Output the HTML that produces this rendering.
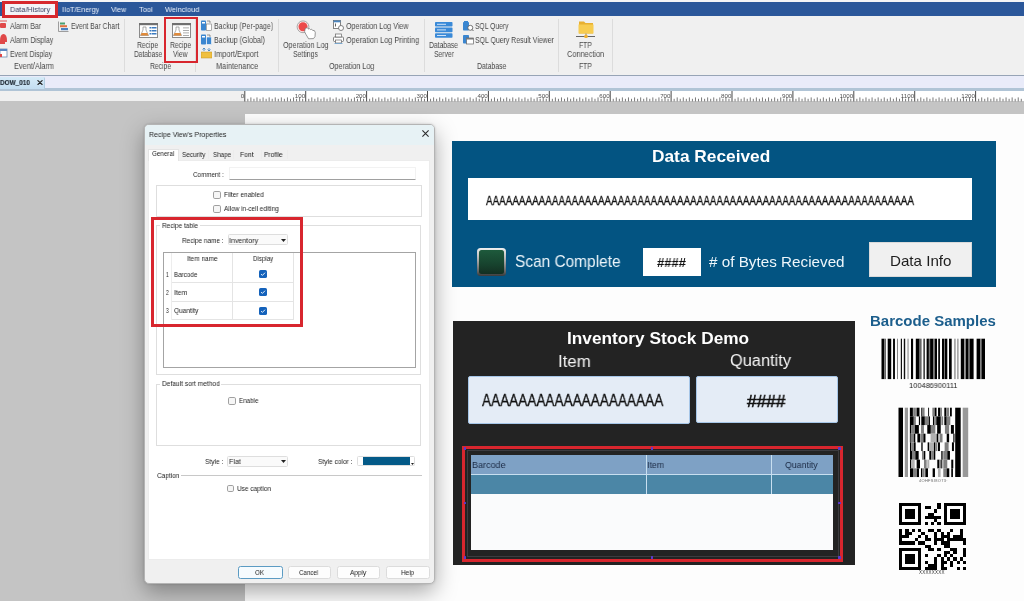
<!DOCTYPE html>
<html><head><meta charset="utf-8">
<style>
*{margin:0;padding:0;box-sizing:border-box}
html,body{width:1024px;height:601px;overflow:hidden;background:#fff;font-family:"Liberation Sans",sans-serif}
.a{position:absolute}
.t{position:absolute;white-space:nowrap;line-height:1;will-change:transform}
</style></head><body>
<div class="a" style="left:0px;top:0px;width:1024px;height:2px;background:#f4f4f6"></div>
<div class="a" style="left:0px;top:1.8px;width:1024px;height:14px;background:#2b579a"></div>
<div class="a" style="left:0px;top:15.8px;width:1024px;height:59.4px;background:#f0f0f0"></div>
<div class="a" style="left:0px;top:75px;width:1024px;height:1.2px;background:#97a4b6"></div>
<div class="a" style="left:0px;top:76.2px;width:1024px;height:11.8px;background:#e9ebf9"></div>
<div class="a" style="left:0px;top:88px;width:1024px;height:2.7px;background:#b0c4d6"></div>
<div class="a" style="left:0px;top:90.7px;width:245px;height:10.5px;background:#f0f0f0"></div>
<div class="a" style="left:245px;top:90.7px;width:779px;height:10.5px;background:#fff"></div>
<div class="a" style="left:0px;top:101.2px;width:1024px;height:500px;background:#c4c4c4"></div>
<div class="a" style="left:245px;top:114px;width:779px;height:487px;background:#fdfdfd"></div>
<div class="a" style="left:2.3px;top:1.2px;width:55.7px;height:16.6px;border:3px solid #d6282e;background:#f4f4f8"></div>
<div class="t" style="left:9.70px;top:6.00px;font-size:7.9px;color:#3a4060;transform:scaleX(0.9226);transform-origin:0 0;">Data/History</div>
<div class="t" style="left:61.70px;top:6.00px;font-size:7.9px;color:#eaf0fa;transform:scaleX(0.9133);transform-origin:0 0;">IIoT/Energy</div>
<div class="t" style="left:111.00px;top:6.00px;font-size:7.9px;color:#eaf0fa;transform:scaleX(0.8979);transform-origin:0 0;">View</div>
<div class="t" style="left:139.00px;top:6.00px;font-size:7.9px;color:#eaf0fa;transform:scaleX(0.9510);transform-origin:0 0;">Tool</div>
<div class="t" style="left:165.00px;top:6.00px;font-size:7.9px;color:#eaf0fa;transform:scaleX(0.9364);transform-origin:0 0;">Weincloud</div>
<div class="a" style="left:124.4px;top:19px;width:1px;height:53px;background:#dcdcdc"></div>
<div class="a" style="left:195.3px;top:19px;width:1px;height:53px;background:#dcdcdc"></div>
<div class="a" style="left:277.8px;top:19px;width:1px;height:53px;background:#dcdcdc"></div>
<div class="a" style="left:424.3px;top:19px;width:1px;height:53px;background:#dcdcdc"></div>
<div class="a" style="left:557.7px;top:19px;width:1px;height:53px;background:#dcdcdc"></div>
<div class="a" style="left:612.4px;top:19px;width:1px;height:53px;background:#dcdcdc"></div>
<div class="t" style="left:9.50px;top:22.00px;font-size:8.8px;color:#4a4a4a;transform:scaleX(0.7939);transform-origin:0 0;">Alarm Bar</div>
<div class="t" style="left:9.50px;top:36.00px;font-size:8.8px;color:#4a4a4a;transform:scaleX(0.7984);transform-origin:0 0;">Alarm Display</div>
<div class="t" style="left:9.50px;top:50.00px;font-size:8.8px;color:#4a4a4a;transform:scaleX(0.7815);transform-origin:0 0;">Event Display</div>
<div class="t" style="left:14.20px;top:62.00px;font-size:8.8px;color:#4a4a4a;transform:scaleX(0.8364);transform-origin:0 0;">Event/Alarm</div>
<div class="t" style="left:70.80px;top:22.00px;font-size:8.8px;color:#4a4a4a;transform:scaleX(0.7713);transform-origin:0 0;">Event Bar Chart</div>
<svg class="a" style="left:0;top:19px" width="9" height="42" viewBox="0 0 9 42">
<rect x="0" y="1.5" width="7" height="1" fill="#e05050"/><rect x="0" y="4" width="6" height="5" rx="1" fill="#e04848"/>
<path d="M0 22 Q0 15 3.5 15 Q7 15 7 22 L7 23 L0 23 Z" fill="#e04848"/><rect x="0" y="23" width="5" height="2" fill="#e04848"/>
<rect x="0" y="30" width="7" height="8" fill="#fff" stroke="#6a8ab0" stroke-width="0.8"/><rect x="0" y="30" width="7" height="2" fill="#5a86c0"/><rect x="0" y="35" width="2" height="3" fill="#e04848"/>
</svg>
<svg class="a" style="left:58px;top:21px" width="11" height="11" viewBox="0 0 11 11">
<path d="M0.5 0.5 V10.5 H10.5" fill="none" stroke="#888" stroke-width="0.8"/>
<rect x="2" y="1.5" width="5" height="2" fill="#4aa070"/><rect x="2" y="4.2" width="7" height="2" fill="#e07040"/><rect x="3" y="7" width="7" height="2.2" fill="#4a80c0"/>
</svg>
<svg class="a" style="left:138.5px;top:22.5px" width="19" height="15" viewBox="0 0 19 15"><rect x="0.5" y="0.5" width="18" height="14" fill="#fff" stroke="#8a8a8a" stroke-width="1"/><rect x="0" y="0" width="19" height="2.2" fill="#707070"/><path d="M4 4 H7 V7 L9.5 12.5 H1.5 L4 7 Z" fill="#fff" stroke="#777" stroke-width="0.6"/><path d="M2.6 10 H8.4 L9.5 12.5 H1.5 Z" fill="#e08a3a"/><rect x="10.5" y="4" width="2" height="1.5" fill="#3a7ac0"/><rect x="13" y="4" width="4.5" height="1.5" fill="#3a7ac0"/><rect x="10.5" y="7" width="2" height="1.5" fill="#3a7ac0"/><rect x="13" y="7" width="4.5" height="1.5" fill="#3a7ac0"/><rect x="10.5" y="10" width="2" height="1.5" fill="#3a7ac0"/><rect x="13" y="10" width="4.5" height="1.5" fill="#3a7ac0"/></svg>
<svg class="a" style="left:171.5px;top:22.5px" width="19" height="15" viewBox="0 0 19 15"><rect x="0.5" y="0.5" width="18" height="14" fill="#fff" stroke="#8a8a8a" stroke-width="1"/><rect x="0" y="0" width="19" height="2.2" fill="#707070"/><path d="M4 4 H7 V7 L9.5 12.5 H1.5 L4 7 Z" fill="#fff" stroke="#777" stroke-width="0.6"/><path d="M2.6 10 H8.4 L9.5 12.5 H1.5 Z" fill="#e08a3a"/><rect x="11" y="4.5" width="6" height="0.8" fill="#999"/><rect x="11" y="7" width="6" height="0.8" fill="#999"/><rect x="11" y="9.5" width="6" height="0.8" fill="#999"/><rect x="11" y="12" width="6" height="0.8" fill="#999"/></svg>
<div class="t" style="left:136.80px;top:41.00px;font-size:8.8px;color:#4a4a4a;transform:scaleX(0.7712);transform-origin:0 0;">Recipe</div>
<div class="t" style="left:133.80px;top:50.00px;font-size:8.8px;color:#4a4a4a;transform:scaleX(0.7494);transform-origin:0 0;">Database</div>
<div class="t" style="left:170.00px;top:41.00px;font-size:8.8px;color:#4a4a4a;transform:scaleX(0.7712);transform-origin:0 0;">Recipe</div>
<div class="t" style="left:173.10px;top:50.00px;font-size:8.8px;color:#4a4a4a;transform:scaleX(0.7671);transform-origin:0 0;">View</div>
<div class="t" style="left:149.80px;top:62.00px;font-size:8.8px;color:#4a4a4a;transform:scaleX(0.7712);transform-origin:0 0;">Recipe</div>
<div class="a" style="left:164.2px;top:17.1px;width:33.5px;height:45.5px;border:2.7px solid #d8262e"></div>
<svg class="a" style="left:201px;top:20px" width="11" height="40" viewBox="0 0 11 40">
<rect x="0" y="0.5" width="5" height="10" rx="0.8" fill="#3a86d0"/><rect x="1" y="2" width="3" height="1.5" fill="#fff"/><rect x="5.5" y="4" width="5" height="6.5" fill="#fff" stroke="#777" stroke-width="0.6"/><path d="M6 1 L9 1 L9 3" fill="none" stroke="#555" stroke-width="0.6"/>
<rect x="0" y="14.5" width="5" height="10" rx="0.8" fill="#3a86d0"/><rect x="1" y="16" width="3" height="1.5" fill="#fff"/><rect x="5.5" y="17" width="5" height="7.5" fill="#3a86d0" stroke="#fff" stroke-width="0.6"/><path d="M6 15 L9 15 L9 17" fill="none" stroke="#555" stroke-width="0.6"/>
<rect x="0" y="32" width="11" height="6" fill="#f0c040" stroke="#c09020" stroke-width="0.5"/><path d="M3 31 V28 M1.5 29.5 L3 28 L4.5 29.5 M8 28 V31 M6.5 29.5 L8 31 L9.5 29.5" stroke="#3a80c0" stroke-width="0.8" fill="none"/>
</svg>
<div class="t" style="left:213.90px;top:22.00px;font-size:8.8px;color:#4a4a4a;transform:scaleX(0.8010);transform-origin:0 0;">Backup (Per-page)</div>
<div class="t" style="left:213.90px;top:36.00px;font-size:8.8px;color:#4a4a4a;transform:scaleX(0.8045);transform-origin:0 0;">Backup (Global)</div>
<div class="t" style="left:213.90px;top:50.00px;font-size:8.8px;color:#4a4a4a;transform:scaleX(0.8415);transform-origin:0 0;">Import/Export</div>
<div class="t" style="left:216.00px;top:62.00px;font-size:8.8px;color:#4a4a4a;transform:scaleX(0.8380);transform-origin:0 0;">Maintenance</div>
<svg class="a" style="left:295px;top:19px" width="22" height="21" viewBox="0 0 22 21">
<circle cx="8" cy="7.8" r="5.9" fill="#fbeaea" stroke="#8a8a8a" stroke-width="0.7"/><circle cx="8" cy="7.8" r="4.5" fill="#ec4a4a"/>
<path d="M10.2 9.6 L12.2 8.6 L13.6 10.2 L14.6 9.6 L15.6 10.6 L16.6 10.2 L17.6 11.4 L19.4 11.6 L20.3 13.5 L20 17.6 L18.5 19.6 L13.6 19.8 L11 15.5 L9.6 12.8 Z" fill="#fff" stroke="#777" stroke-width="0.75" stroke-linejoin="round"/>
</svg>
<svg class="a" style="left:333px;top:20px" width="11" height="24" viewBox="0 0 11 24">
<rect x="0.5" y="0.5" width="7" height="8" fill="#fff" stroke="#666" stroke-width="0.8"/><rect x="0.5" y="0.5" width="7" height="1.8" fill="#4a86c0"/><rect x="2" y="3.5" width="1" height="3" fill="#666"/><circle cx="8" cy="8" r="2.5" fill="#fff" stroke="#666" stroke-width="0.8"/>
<rect x="0.5" y="17" width="10" height="4.5" rx="1" fill="#fff" stroke="#666" stroke-width="0.8"/><rect x="2.5" y="14" width="6" height="3" fill="#fff" stroke="#666" stroke-width="0.7"/><rect x="2.5" y="20" width="6" height="3" fill="#fff" stroke="#666" stroke-width="0.7"/><rect x="1.5" y="23.2" width="8" height="0.8" fill="#6aa0d0"/>
</svg>
<div class="t" style="left:283.30px;top:41.00px;font-size:8.8px;color:#4a4a4a;transform:scaleX(0.8181);transform-origin:0 0;">Operation Log</div>
<div class="t" style="left:293.40px;top:50.00px;font-size:8.8px;color:#4a4a4a;transform:scaleX(0.7827);transform-origin:0 0;">Settings</div>
<div class="t" style="left:346.00px;top:22.00px;font-size:8.8px;color:#4a4a4a;transform:scaleX(0.8103);transform-origin:0 0;">Operation Log View</div>
<div class="t" style="left:346.00px;top:36.00px;font-size:8.8px;color:#4a4a4a;transform:scaleX(0.8306);transform-origin:0 0;">Operation Log Printing</div>
<div class="t" style="left:328.60px;top:62.00px;font-size:8.8px;color:#4a4a4a;transform:scaleX(0.8127);transform-origin:0 0;">Operation Log</div>
<svg class="a" style="left:435px;top:21.5px" width="18" height="16" viewBox="0 0 18 16">
<rect x="0" y="0" width="17.5" height="4.6" rx="0.8" fill="#3a8ad8"/><rect x="0" y="5.6" width="17.5" height="4.6" rx="0.8" fill="#3a8ad8"/><rect x="0" y="11.2" width="17.5" height="4.6" rx="0.8" fill="#3a8ad8"/>
<rect x="2" y="1.8" width="9" height="1" fill="#cfe3f7"/><rect x="2" y="7.4" width="9" height="1" fill="#cfe3f7"/><rect x="2" y="13" width="9" height="1" fill="#cfe3f7"/>
</svg>
<svg class="a" style="left:462.5px;top:20.5px" width="11" height="24" viewBox="0 0 11 24">
<rect x="0" y="1" width="6" height="8.5" rx="0.8" fill="#3a86d0"/><rect x="1" y="0" width="4" height="1.5" fill="#3a86d0"/><circle cx="7.3" cy="6.8" r="2.5" fill="#fff" stroke="#555" stroke-width="0.8"/><path d="M9 8.5 L10.5 10" stroke="#555" stroke-width="0.9"/>
<rect x="0" y="14" width="6" height="8.5" rx="0.8" fill="#3a86d0"/><rect x="3.5" y="17" width="7" height="6" fill="#fff" stroke="#666" stroke-width="0.7"/><rect x="3.5" y="17" width="7" height="1.5" fill="#777"/>
</svg>
<div class="t" style="left:429.40px;top:41.00px;font-size:8.8px;color:#4a4a4a;transform:scaleX(0.7706);transform-origin:0 0;">Database</div>
<div class="t" style="left:434.00px;top:50.00px;font-size:8.8px;color:#4a4a4a;transform:scaleX(0.7698);transform-origin:0 0;">Server</div>
<div class="t" style="left:474.70px;top:22.00px;font-size:8.8px;color:#4a4a4a;transform:scaleX(0.7668);transform-origin:0 0;">SQL Query</div>
<div class="t" style="left:474.70px;top:36.00px;font-size:8.8px;color:#4a4a4a;transform:scaleX(0.7861);transform-origin:0 0;">SQL Query Result Viewer</div>
<div class="t" style="left:476.60px;top:62.00px;font-size:8.8px;color:#4a4a4a;transform:scaleX(0.7785);transform-origin:0 0;">Database</div>
<svg class="a" style="left:575px;top:20px" width="21" height="18" viewBox="0 0 21 18">
<path d="M4 1.5 H9 L10.5 3 H18 V13.5 H4 Z" fill="#e8b030"/><path d="M3.5 4.5 H18.5 V13.5 H3.5 Z" fill="#f7cc50"/>
<rect x="10.5" y="13.5" width="1" height="2.5" fill="#888"/><rect x="1" y="16" width="19" height="0.9" fill="#555"/><circle cx="11" cy="16.4" r="1.8" fill="#f0b030"/>
</svg>
<div class="t" style="left:579.00px;top:41.00px;font-size:8.8px;color:#4a4a4a;transform:scaleX(0.7763);transform-origin:0 0;">FTP</div>
<div class="t" style="left:566.90px;top:50.00px;font-size:8.8px;color:#4a4a4a;transform:scaleX(0.8361);transform-origin:0 0;">Connection</div>
<div class="t" style="left:579.00px;top:62.00px;font-size:8.8px;color:#4a4a4a;transform:scaleX(0.7763);transform-origin:0 0;">FTP</div>
<div class="a" style="left:0px;top:77px;width:45px;height:11.6px;background:linear-gradient(#d6ebf7,#c3ddf1);border-right:1px solid #b0cce0;border-top-right-radius:1.5px"></div>
<div class="t" style="left:-0.50px;top:79.00px;font-size:7.6px;color:#1c2530;font-weight:bold;transform:scaleX(0.8431);transform-origin:0 0;-webkit-text-stroke:0.15px #1c2530">DOW_010</div>
<svg class="a" style="left:36.5px;top:80.3px;will-change:transform" width="6" height="5.2" viewBox="0 0 6 5.2"><path d="M0.9 0.7 L5.1 4.5 M5.1 0.7 L0.9 4.5" stroke="#222" stroke-width="1.15" stroke-linecap="round"/></svg>
<svg class="a" style="left:0;top:90.7px;will-change:transform" width="1024" height="11" viewBox="0 0 1024 11"><rect x="244.30" y="0" width="1" height="10.5" fill="#4a4a4a"/><text x="244.20" y="6.6" font-size="6.2" text-anchor="end" fill="#505050" font-family="Liberation Sans">0</text><rect x="247.34" y="7.8" width="1" height="2.7" fill="#7a7a7a"/><rect x="250.39" y="6.4" width="1" height="4.1" fill="#7a7a7a"/><rect x="253.44" y="7.8" width="1" height="2.7" fill="#7a7a7a"/><rect x="256.48" y="6.4" width="1" height="4.1" fill="#7a7a7a"/><rect x="259.53" y="7.8" width="1" height="2.7" fill="#7a7a7a"/><rect x="262.57" y="6.4" width="1" height="4.1" fill="#7a7a7a"/><rect x="265.62" y="7.8" width="1" height="2.7" fill="#7a7a7a"/><rect x="268.66" y="6.4" width="1" height="4.1" fill="#7a7a7a"/><rect x="271.71" y="7.8" width="1" height="2.7" fill="#7a7a7a"/><rect x="274.75" y="6.4" width="1" height="4.1" fill="#7a7a7a"/><rect x="277.80" y="7.8" width="1" height="2.7" fill="#7a7a7a"/><rect x="280.84" y="6.4" width="1" height="4.1" fill="#7a7a7a"/><rect x="283.88" y="7.8" width="1" height="2.7" fill="#7a7a7a"/><rect x="286.93" y="6.4" width="1" height="4.1" fill="#7a7a7a"/><rect x="289.98" y="7.8" width="1" height="2.7" fill="#7a7a7a"/><rect x="293.02" y="6.4" width="1" height="4.1" fill="#7a7a7a"/><rect x="296.06" y="7.8" width="1" height="2.7" fill="#7a7a7a"/><rect x="299.11" y="6.4" width="1" height="4.1" fill="#7a7a7a"/><rect x="302.16" y="7.8" width="1" height="2.7" fill="#7a7a7a"/><rect x="305.20" y="0" width="1" height="10.5" fill="#4a4a4a"/><text x="305.10" y="6.6" font-size="6.2" text-anchor="end" fill="#505050" font-family="Liberation Sans">100</text><rect x="308.25" y="7.8" width="1" height="2.7" fill="#7a7a7a"/><rect x="311.29" y="6.4" width="1" height="4.1" fill="#7a7a7a"/><rect x="314.34" y="7.8" width="1" height="2.7" fill="#7a7a7a"/><rect x="317.38" y="6.4" width="1" height="4.1" fill="#7a7a7a"/><rect x="320.43" y="7.8" width="1" height="2.7" fill="#7a7a7a"/><rect x="323.47" y="6.4" width="1" height="4.1" fill="#7a7a7a"/><rect x="326.51" y="7.8" width="1" height="2.7" fill="#7a7a7a"/><rect x="329.56" y="6.4" width="1" height="4.1" fill="#7a7a7a"/><rect x="332.61" y="7.8" width="1" height="2.7" fill="#7a7a7a"/><rect x="335.65" y="6.4" width="1" height="4.1" fill="#7a7a7a"/><rect x="338.69" y="7.8" width="1" height="2.7" fill="#7a7a7a"/><rect x="341.74" y="6.4" width="1" height="4.1" fill="#7a7a7a"/><rect x="344.79" y="7.8" width="1" height="2.7" fill="#7a7a7a"/><rect x="347.83" y="6.4" width="1" height="4.1" fill="#7a7a7a"/><rect x="350.88" y="7.8" width="1" height="2.7" fill="#7a7a7a"/><rect x="353.92" y="6.4" width="1" height="4.1" fill="#7a7a7a"/><rect x="356.97" y="7.8" width="1" height="2.7" fill="#7a7a7a"/><rect x="360.01" y="6.4" width="1" height="4.1" fill="#7a7a7a"/><rect x="363.06" y="7.8" width="1" height="2.7" fill="#7a7a7a"/><rect x="366.10" y="0" width="1" height="10.5" fill="#4a4a4a"/><text x="366.00" y="6.6" font-size="6.2" text-anchor="end" fill="#505050" font-family="Liberation Sans">200</text><rect x="369.14" y="7.8" width="1" height="2.7" fill="#7a7a7a"/><rect x="372.19" y="6.4" width="1" height="4.1" fill="#7a7a7a"/><rect x="375.24" y="7.8" width="1" height="2.7" fill="#7a7a7a"/><rect x="378.28" y="6.4" width="1" height="4.1" fill="#7a7a7a"/><rect x="381.33" y="7.8" width="1" height="2.7" fill="#7a7a7a"/><rect x="384.37" y="6.4" width="1" height="4.1" fill="#7a7a7a"/><rect x="387.42" y="7.8" width="1" height="2.7" fill="#7a7a7a"/><rect x="390.46" y="6.4" width="1" height="4.1" fill="#7a7a7a"/><rect x="393.50" y="7.8" width="1" height="2.7" fill="#7a7a7a"/><rect x="396.55" y="6.4" width="1" height="4.1" fill="#7a7a7a"/><rect x="399.60" y="7.8" width="1" height="2.7" fill="#7a7a7a"/><rect x="402.64" y="6.4" width="1" height="4.1" fill="#7a7a7a"/><rect x="405.69" y="7.8" width="1" height="2.7" fill="#7a7a7a"/><rect x="408.73" y="6.4" width="1" height="4.1" fill="#7a7a7a"/><rect x="411.77" y="7.8" width="1" height="2.7" fill="#7a7a7a"/><rect x="414.82" y="6.4" width="1" height="4.1" fill="#7a7a7a"/><rect x="417.87" y="7.8" width="1" height="2.7" fill="#7a7a7a"/><rect x="420.91" y="6.4" width="1" height="4.1" fill="#7a7a7a"/><rect x="423.96" y="7.8" width="1" height="2.7" fill="#7a7a7a"/><rect x="427.00" y="0" width="1" height="10.5" fill="#4a4a4a"/><text x="426.90" y="6.6" font-size="6.2" text-anchor="end" fill="#505050" font-family="Liberation Sans">300</text><rect x="430.05" y="7.8" width="1" height="2.7" fill="#7a7a7a"/><rect x="433.09" y="6.4" width="1" height="4.1" fill="#7a7a7a"/><rect x="436.13" y="7.8" width="1" height="2.7" fill="#7a7a7a"/><rect x="439.18" y="6.4" width="1" height="4.1" fill="#7a7a7a"/><rect x="442.23" y="7.8" width="1" height="2.7" fill="#7a7a7a"/><rect x="445.27" y="6.4" width="1" height="4.1" fill="#7a7a7a"/><rect x="448.31" y="7.8" width="1" height="2.7" fill="#7a7a7a"/><rect x="451.36" y="6.4" width="1" height="4.1" fill="#7a7a7a"/><rect x="454.40" y="7.8" width="1" height="2.7" fill="#7a7a7a"/><rect x="457.45" y="6.4" width="1" height="4.1" fill="#7a7a7a"/><rect x="460.50" y="7.8" width="1" height="2.7" fill="#7a7a7a"/><rect x="463.54" y="6.4" width="1" height="4.1" fill="#7a7a7a"/><rect x="466.59" y="7.8" width="1" height="2.7" fill="#7a7a7a"/><rect x="469.63" y="6.4" width="1" height="4.1" fill="#7a7a7a"/><rect x="472.68" y="7.8" width="1" height="2.7" fill="#7a7a7a"/><rect x="475.72" y="6.4" width="1" height="4.1" fill="#7a7a7a"/><rect x="478.76" y="7.8" width="1" height="2.7" fill="#7a7a7a"/><rect x="481.81" y="6.4" width="1" height="4.1" fill="#7a7a7a"/><rect x="484.86" y="7.8" width="1" height="2.7" fill="#7a7a7a"/><rect x="487.90" y="0" width="1" height="10.5" fill="#4a4a4a"/><text x="487.80" y="6.6" font-size="6.2" text-anchor="end" fill="#505050" font-family="Liberation Sans">400</text><rect x="490.94" y="7.8" width="1" height="2.7" fill="#7a7a7a"/><rect x="493.99" y="6.4" width="1" height="4.1" fill="#7a7a7a"/><rect x="497.03" y="7.8" width="1" height="2.7" fill="#7a7a7a"/><rect x="500.08" y="6.4" width="1" height="4.1" fill="#7a7a7a"/><rect x="503.12" y="7.8" width="1" height="2.7" fill="#7a7a7a"/><rect x="506.17" y="6.4" width="1" height="4.1" fill="#7a7a7a"/><rect x="509.22" y="7.8" width="1" height="2.7" fill="#7a7a7a"/><rect x="512.26" y="6.4" width="1" height="4.1" fill="#7a7a7a"/><rect x="515.31" y="7.8" width="1" height="2.7" fill="#7a7a7a"/><rect x="518.35" y="6.4" width="1" height="4.1" fill="#7a7a7a"/><rect x="521.39" y="7.8" width="1" height="2.7" fill="#7a7a7a"/><rect x="524.44" y="6.4" width="1" height="4.1" fill="#7a7a7a"/><rect x="527.49" y="7.8" width="1" height="2.7" fill="#7a7a7a"/><rect x="530.53" y="6.4" width="1" height="4.1" fill="#7a7a7a"/><rect x="533.58" y="7.8" width="1" height="2.7" fill="#7a7a7a"/><rect x="536.62" y="6.4" width="1" height="4.1" fill="#7a7a7a"/><rect x="539.66" y="7.8" width="1" height="2.7" fill="#7a7a7a"/><rect x="542.71" y="6.4" width="1" height="4.1" fill="#7a7a7a"/><rect x="545.75" y="7.8" width="1" height="2.7" fill="#7a7a7a"/><rect x="548.80" y="0" width="1" height="10.5" fill="#4a4a4a"/><text x="548.70" y="6.6" font-size="6.2" text-anchor="end" fill="#505050" font-family="Liberation Sans">500</text><rect x="551.85" y="7.8" width="1" height="2.7" fill="#7a7a7a"/><rect x="554.89" y="6.4" width="1" height="4.1" fill="#7a7a7a"/><rect x="557.93" y="7.8" width="1" height="2.7" fill="#7a7a7a"/><rect x="560.98" y="6.4" width="1" height="4.1" fill="#7a7a7a"/><rect x="564.02" y="7.8" width="1" height="2.7" fill="#7a7a7a"/><rect x="567.07" y="6.4" width="1" height="4.1" fill="#7a7a7a"/><rect x="570.12" y="7.8" width="1" height="2.7" fill="#7a7a7a"/><rect x="573.16" y="6.4" width="1" height="4.1" fill="#7a7a7a"/><rect x="576.20" y="7.8" width="1" height="2.7" fill="#7a7a7a"/><rect x="579.25" y="6.4" width="1" height="4.1" fill="#7a7a7a"/><rect x="582.30" y="7.8" width="1" height="2.7" fill="#7a7a7a"/><rect x="585.34" y="6.4" width="1" height="4.1" fill="#7a7a7a"/><rect x="588.38" y="7.8" width="1" height="2.7" fill="#7a7a7a"/><rect x="591.43" y="6.4" width="1" height="4.1" fill="#7a7a7a"/><rect x="594.48" y="7.8" width="1" height="2.7" fill="#7a7a7a"/><rect x="597.52" y="6.4" width="1" height="4.1" fill="#7a7a7a"/><rect x="600.57" y="7.8" width="1" height="2.7" fill="#7a7a7a"/><rect x="603.61" y="6.4" width="1" height="4.1" fill="#7a7a7a"/><rect x="606.65" y="7.8" width="1" height="2.7" fill="#7a7a7a"/><rect x="609.70" y="0" width="1" height="10.5" fill="#4a4a4a"/><text x="609.60" y="6.6" font-size="6.2" text-anchor="end" fill="#505050" font-family="Liberation Sans">600</text><rect x="612.75" y="7.8" width="1" height="2.7" fill="#7a7a7a"/><rect x="615.79" y="6.4" width="1" height="4.1" fill="#7a7a7a"/><rect x="618.84" y="7.8" width="1" height="2.7" fill="#7a7a7a"/><rect x="621.88" y="6.4" width="1" height="4.1" fill="#7a7a7a"/><rect x="624.92" y="7.8" width="1" height="2.7" fill="#7a7a7a"/><rect x="627.97" y="6.4" width="1" height="4.1" fill="#7a7a7a"/><rect x="631.01" y="7.8" width="1" height="2.7" fill="#7a7a7a"/><rect x="634.06" y="6.4" width="1" height="4.1" fill="#7a7a7a"/><rect x="637.11" y="7.8" width="1" height="2.7" fill="#7a7a7a"/><rect x="640.15" y="6.4" width="1" height="4.1" fill="#7a7a7a"/><rect x="643.19" y="7.8" width="1" height="2.7" fill="#7a7a7a"/><rect x="646.24" y="6.4" width="1" height="4.1" fill="#7a7a7a"/><rect x="649.29" y="7.8" width="1" height="2.7" fill="#7a7a7a"/><rect x="652.33" y="6.4" width="1" height="4.1" fill="#7a7a7a"/><rect x="655.38" y="7.8" width="1" height="2.7" fill="#7a7a7a"/><rect x="658.42" y="6.4" width="1" height="4.1" fill="#7a7a7a"/><rect x="661.46" y="7.8" width="1" height="2.7" fill="#7a7a7a"/><rect x="664.51" y="6.4" width="1" height="4.1" fill="#7a7a7a"/><rect x="667.56" y="7.8" width="1" height="2.7" fill="#7a7a7a"/><rect x="670.60" y="0" width="1" height="10.5" fill="#4a4a4a"/><text x="670.50" y="6.6" font-size="6.2" text-anchor="end" fill="#505050" font-family="Liberation Sans">700</text><rect x="673.64" y="7.8" width="1" height="2.7" fill="#7a7a7a"/><rect x="676.69" y="6.4" width="1" height="4.1" fill="#7a7a7a"/><rect x="679.74" y="7.8" width="1" height="2.7" fill="#7a7a7a"/><rect x="682.78" y="6.4" width="1" height="4.1" fill="#7a7a7a"/><rect x="685.83" y="7.8" width="1" height="2.7" fill="#7a7a7a"/><rect x="688.87" y="6.4" width="1" height="4.1" fill="#7a7a7a"/><rect x="691.91" y="7.8" width="1" height="2.7" fill="#7a7a7a"/><rect x="694.96" y="6.4" width="1" height="4.1" fill="#7a7a7a"/><rect x="698.00" y="7.8" width="1" height="2.7" fill="#7a7a7a"/><rect x="701.05" y="6.4" width="1" height="4.1" fill="#7a7a7a"/><rect x="704.10" y="7.8" width="1" height="2.7" fill="#7a7a7a"/><rect x="707.14" y="6.4" width="1" height="4.1" fill="#7a7a7a"/><rect x="710.18" y="7.8" width="1" height="2.7" fill="#7a7a7a"/><rect x="713.23" y="6.4" width="1" height="4.1" fill="#7a7a7a"/><rect x="716.27" y="7.8" width="1" height="2.7" fill="#7a7a7a"/><rect x="719.32" y="6.4" width="1" height="4.1" fill="#7a7a7a"/><rect x="722.37" y="7.8" width="1" height="2.7" fill="#7a7a7a"/><rect x="725.41" y="6.4" width="1" height="4.1" fill="#7a7a7a"/><rect x="728.45" y="7.8" width="1" height="2.7" fill="#7a7a7a"/><rect x="731.50" y="0" width="1" height="10.5" fill="#4a4a4a"/><text x="731.40" y="6.6" font-size="6.2" text-anchor="end" fill="#505050" font-family="Liberation Sans">800</text><rect x="734.55" y="7.8" width="1" height="2.7" fill="#7a7a7a"/><rect x="737.59" y="6.4" width="1" height="4.1" fill="#7a7a7a"/><rect x="740.63" y="7.8" width="1" height="2.7" fill="#7a7a7a"/><rect x="743.68" y="6.4" width="1" height="4.1" fill="#7a7a7a"/><rect x="746.73" y="7.8" width="1" height="2.7" fill="#7a7a7a"/><rect x="749.77" y="6.4" width="1" height="4.1" fill="#7a7a7a"/><rect x="752.82" y="7.8" width="1" height="2.7" fill="#7a7a7a"/><rect x="755.86" y="6.4" width="1" height="4.1" fill="#7a7a7a"/><rect x="758.90" y="7.8" width="1" height="2.7" fill="#7a7a7a"/><rect x="761.95" y="6.4" width="1" height="4.1" fill="#7a7a7a"/><rect x="764.99" y="7.8" width="1" height="2.7" fill="#7a7a7a"/><rect x="768.04" y="6.4" width="1" height="4.1" fill="#7a7a7a"/><rect x="771.09" y="7.8" width="1" height="2.7" fill="#7a7a7a"/><rect x="774.13" y="6.4" width="1" height="4.1" fill="#7a7a7a"/><rect x="777.17" y="7.8" width="1" height="2.7" fill="#7a7a7a"/><rect x="780.22" y="6.4" width="1" height="4.1" fill="#7a7a7a"/><rect x="783.27" y="7.8" width="1" height="2.7" fill="#7a7a7a"/><rect x="786.31" y="6.4" width="1" height="4.1" fill="#7a7a7a"/><rect x="789.36" y="7.8" width="1" height="2.7" fill="#7a7a7a"/><rect x="792.40" y="0" width="1" height="10.5" fill="#4a4a4a"/><text x="792.30" y="6.6" font-size="6.2" text-anchor="end" fill="#505050" font-family="Liberation Sans">900</text><rect x="795.44" y="7.8" width="1" height="2.7" fill="#7a7a7a"/><rect x="798.49" y="6.4" width="1" height="4.1" fill="#7a7a7a"/><rect x="801.54" y="7.8" width="1" height="2.7" fill="#7a7a7a"/><rect x="804.58" y="6.4" width="1" height="4.1" fill="#7a7a7a"/><rect x="807.62" y="7.8" width="1" height="2.7" fill="#7a7a7a"/><rect x="810.67" y="6.4" width="1" height="4.1" fill="#7a7a7a"/><rect x="813.71" y="7.8" width="1" height="2.7" fill="#7a7a7a"/><rect x="816.76" y="6.4" width="1" height="4.1" fill="#7a7a7a"/><rect x="819.81" y="7.8" width="1" height="2.7" fill="#7a7a7a"/><rect x="822.85" y="6.4" width="1" height="4.1" fill="#7a7a7a"/><rect x="825.89" y="7.8" width="1" height="2.7" fill="#7a7a7a"/><rect x="828.94" y="6.4" width="1" height="4.1" fill="#7a7a7a"/><rect x="831.98" y="7.8" width="1" height="2.7" fill="#7a7a7a"/><rect x="835.03" y="6.4" width="1" height="4.1" fill="#7a7a7a"/><rect x="838.08" y="7.8" width="1" height="2.7" fill="#7a7a7a"/><rect x="841.12" y="6.4" width="1" height="4.1" fill="#7a7a7a"/><rect x="844.16" y="7.8" width="1" height="2.7" fill="#7a7a7a"/><rect x="847.21" y="6.4" width="1" height="4.1" fill="#7a7a7a"/><rect x="850.26" y="7.8" width="1" height="2.7" fill="#7a7a7a"/><rect x="853.30" y="0" width="1" height="10.5" fill="#4a4a4a"/><text x="853.20" y="6.6" font-size="6.2" text-anchor="end" fill="#505050" font-family="Liberation Sans">1000</text><rect x="856.35" y="7.8" width="1" height="2.7" fill="#7a7a7a"/><rect x="859.39" y="6.4" width="1" height="4.1" fill="#7a7a7a"/><rect x="862.43" y="7.8" width="1" height="2.7" fill="#7a7a7a"/><rect x="865.48" y="6.4" width="1" height="4.1" fill="#7a7a7a"/><rect x="868.53" y="7.8" width="1" height="2.7" fill="#7a7a7a"/><rect x="871.57" y="6.4" width="1" height="4.1" fill="#7a7a7a"/><rect x="874.62" y="7.8" width="1" height="2.7" fill="#7a7a7a"/><rect x="877.66" y="6.4" width="1" height="4.1" fill="#7a7a7a"/><rect x="880.70" y="7.8" width="1" height="2.7" fill="#7a7a7a"/><rect x="883.75" y="6.4" width="1" height="4.1" fill="#7a7a7a"/><rect x="886.80" y="7.8" width="1" height="2.7" fill="#7a7a7a"/><rect x="889.84" y="6.4" width="1" height="4.1" fill="#7a7a7a"/><rect x="892.88" y="7.8" width="1" height="2.7" fill="#7a7a7a"/><rect x="895.93" y="6.4" width="1" height="4.1" fill="#7a7a7a"/><rect x="898.97" y="7.8" width="1" height="2.7" fill="#7a7a7a"/><rect x="902.02" y="6.4" width="1" height="4.1" fill="#7a7a7a"/><rect x="905.07" y="7.8" width="1" height="2.7" fill="#7a7a7a"/><rect x="908.11" y="6.4" width="1" height="4.1" fill="#7a7a7a"/><rect x="911.15" y="7.8" width="1" height="2.7" fill="#7a7a7a"/><rect x="914.20" y="0" width="1" height="10.5" fill="#4a4a4a"/><text x="914.10" y="6.6" font-size="6.2" text-anchor="end" fill="#505050" font-family="Liberation Sans">1100</text><rect x="917.24" y="7.8" width="1" height="2.7" fill="#7a7a7a"/><rect x="920.29" y="6.4" width="1" height="4.1" fill="#7a7a7a"/><rect x="923.34" y="7.8" width="1" height="2.7" fill="#7a7a7a"/><rect x="926.38" y="6.4" width="1" height="4.1" fill="#7a7a7a"/><rect x="929.42" y="7.8" width="1" height="2.7" fill="#7a7a7a"/><rect x="932.47" y="6.4" width="1" height="4.1" fill="#7a7a7a"/><rect x="935.52" y="7.8" width="1" height="2.7" fill="#7a7a7a"/><rect x="938.56" y="6.4" width="1" height="4.1" fill="#7a7a7a"/><rect x="941.61" y="7.8" width="1" height="2.7" fill="#7a7a7a"/><rect x="944.65" y="6.4" width="1" height="4.1" fill="#7a7a7a"/><rect x="947.69" y="7.8" width="1" height="2.7" fill="#7a7a7a"/><rect x="950.74" y="6.4" width="1" height="4.1" fill="#7a7a7a"/><rect x="953.79" y="7.8" width="1" height="2.7" fill="#7a7a7a"/><rect x="956.83" y="6.4" width="1" height="4.1" fill="#7a7a7a"/><rect x="959.88" y="7.8" width="1" height="2.7" fill="#7a7a7a"/><rect x="962.92" y="6.4" width="1" height="4.1" fill="#7a7a7a"/><rect x="965.96" y="7.8" width="1" height="2.7" fill="#7a7a7a"/><rect x="969.01" y="6.4" width="1" height="4.1" fill="#7a7a7a"/><rect x="972.06" y="7.8" width="1" height="2.7" fill="#7a7a7a"/><rect x="975.10" y="0" width="1" height="10.5" fill="#4a4a4a"/><text x="975.00" y="6.6" font-size="6.2" text-anchor="end" fill="#505050" font-family="Liberation Sans">1200</text><rect x="978.14" y="7.8" width="1" height="2.7" fill="#7a7a7a"/><rect x="981.19" y="6.4" width="1" height="4.1" fill="#7a7a7a"/><rect x="984.23" y="7.8" width="1" height="2.7" fill="#7a7a7a"/><rect x="987.28" y="6.4" width="1" height="4.1" fill="#7a7a7a"/><rect x="990.33" y="7.8" width="1" height="2.7" fill="#7a7a7a"/><rect x="993.37" y="6.4" width="1" height="4.1" fill="#7a7a7a"/><rect x="996.41" y="7.8" width="1" height="2.7" fill="#7a7a7a"/><rect x="999.46" y="6.4" width="1" height="4.1" fill="#7a7a7a"/><rect x="1002.50" y="7.8" width="1" height="2.7" fill="#7a7a7a"/><rect x="1005.55" y="6.4" width="1" height="4.1" fill="#7a7a7a"/><rect x="1008.60" y="7.8" width="1" height="2.7" fill="#7a7a7a"/><rect x="1011.64" y="6.4" width="1" height="4.1" fill="#7a7a7a"/><rect x="1014.68" y="7.8" width="1" height="2.7" fill="#7a7a7a"/><rect x="1017.73" y="6.4" width="1" height="4.1" fill="#7a7a7a"/><rect x="1020.78" y="7.8" width="1" height="2.7" fill="#7a7a7a"/></svg>
<div class="a" style="left:452.3px;top:140.8px;width:543.7px;height:145.9px;background:#035482"></div>
<div class="t" style="left:652.45px;top:148.00px;font-size:16.5px;color:#fff;font-weight:bold;transform:scaleX(1.0485);transform-origin:0 0;">Data Received</div>
<div class="a" style="left:468px;top:178px;width:504px;height:41.7px;background:#fff"></div>
<div class="t" style="left:486.00px;top:194.00px;font-size:13.0px;color:#111;transform:scaleX(0.7593);transform-origin:0 0;-webkit-text-stroke:0.35px #111">AAAAAAAAAAAAAAAAAAAAAAAAAAAAAAAAAAAAAAAAAAAAAAAAAAAAAAAAAAAAAAAAA</div>
<div class="a" style="left:477.2px;top:248px;width:28.8px;height:28.2px;border-radius:3.5px;background:linear-gradient(#f0f0f0,#a8a8a8 45%,#606060 85%,#3a3a3a)"></div>
<div class="a" style="left:479.2px;top:250px;width:24.8px;height:24.2px;border-radius:2.5px;background:linear-gradient(#1e5a3c,#17432e 60%,#132f22)"></div>
<div class="t" style="left:514.80px;top:253.00px;font-size:16.4px;color:#eef6fb;transform:scaleX(0.9415);transform-origin:0 0;">Scan Complete</div>
<div class="a" style="left:643.4px;top:247.8px;width:58.1px;height:28.3px;background:#fff"></div>
<div class="t" style="left:657.40px;top:256.00px;font-size:13.5px;color:#111;font-weight:bold;transform:scaleX(0.9632);transform-origin:0 0;">####</div>
<div class="t" style="left:708.80px;top:255.00px;font-size:14.4px;color:#eef6fb;transform:scaleX(1.0595);transform-origin:0 0;"># of Bytes Recieved</div>
<div class="a" style="left:869px;top:242.3px;width:102.6px;height:34.6px;background:#f0f0f0;border:1px solid #dadada"></div>
<div class="t" style="left:889.86px;top:254.00px;font-size:14.6px;color:#1e1e1e;transform:scaleX(1.0377);transform-origin:0 0;">Data Info</div>
<div class="a" style="left:453px;top:321.2px;width:402.2px;height:244.3px;background:#232323"></div>
<div class="t" style="left:566.59px;top:330.00px;font-size:17.0px;color:#fff;font-weight:bold;transform:scaleX(1.0146);transform-origin:0 0;">Inventory Stock Demo</div>
<div class="t" style="left:557.93px;top:353.00px;font-size:17.3px;color:#f6f6f6;transform:scaleX(0.9747);transform-origin:0 0;">Item</div>
<div class="t" style="left:730.30px;top:352.00px;font-size:17.3px;color:#f6f6f6;transform:scaleX(0.9472);transform-origin:0 0;">Quantity</div>
<div class="a" style="left:467.7px;top:376px;width:222.2px;height:48px;background:#e4ecf6;border:1.5px solid #a6c6e8;border-radius:2px"></div>
<div class="a" style="left:695.7px;top:375.8px;width:142.4px;height:47.6px;background:#e4ecf6;border:1.5px solid #a6c6e8;border-radius:2px"></div>
<div class="t" style="left:481.70px;top:393.00px;font-size:16.8px;color:#111;transform:scaleX(0.8096);transform-origin:0 0;-webkit-text-stroke:0.3px #111">AAAAAAAAAAAAAAAAAAAA</div>
<div class="t" style="left:747.00px;top:393.00px;font-size:17.4px;color:#111;transform:scaleX(0.9919);transform-origin:0 0;-webkit-text-stroke:0.6px #111">####</div>
<div class="a" style="left:462.4px;top:446px;width:380.8px;height:116px;border:3.9px solid #d8262e"></div>
<div class="a" style="left:466.6px;top:449.9px;width:1px;height:107px;background:#9a8a90"></div>
<div class="a" style="left:466.6px;top:449.9px;width:372px;height:0.9px;background:#8a8088"></div>
<div class="a" style="left:466.8px;top:450.2px;width:371.8px;height:107.3px;border:0.8px solid #3c3c40"></div>
<div class="a" style="left:471.4px;top:455px;width:361.9px;height:18.7px;background:#7ea1c5"></div>
<div class="a" style="left:471.4px;top:473.7px;width:361.9px;height:1.7px;background:#c8dff0"></div>
<div class="a" style="left:471.4px;top:475.4px;width:361.9px;height:18.2px;background:#4b86a6"></div>
<div class="a" style="left:471.4px;top:493.6px;width:361.9px;height:56.9px;background:#fafbfc"></div>
<div class="a" style="left:645.7px;top:455px;width:1.2px;height:38.6px;background:#c8dff0"></div>
<div class="a" style="left:770.7px;top:455px;width:1.2px;height:38.6px;background:#c8dff0"></div>
<div class="t" style="left:471.90px;top:460.00px;font-size:9.6px;color:#1b2a44;transform:scaleX(0.9379);transform-origin:0 0;">Barcode</div>
<div class="t" style="left:647.40px;top:460.00px;font-size:9.6px;color:#1b2a44;transform:scaleX(0.9161);transform-origin:0 0;">Item</div>
<div class="t" style="left:785.20px;top:460.00px;font-size:9.6px;color:#1b2a44;transform:scaleX(0.9129);transform-origin:0 0;">Quantity</div>
<div class="a" style="left:463.7px;top:447.0px;width:2.6px;height:2.6px;background:#5a3ad0;border-radius:0.5px"></div>
<div class="a" style="left:650.7px;top:447.0px;width:2.6px;height:2.6px;background:#5a3ad0;border-radius:0.5px"></div>
<div class="a" style="left:838.2px;top:447.0px;width:2.6px;height:2.6px;background:#5a3ad0;border-radius:0.5px"></div>
<div class="a" style="left:463.7px;top:501.7px;width:2.6px;height:2.6px;background:#5a3ad0;border-radius:0.5px"></div>
<div class="a" style="left:838.2px;top:501.7px;width:2.6px;height:2.6px;background:#5a3ad0;border-radius:0.5px"></div>
<div class="a" style="left:463.7px;top:556.3000000000001px;width:2.6px;height:2.6px;background:#5a3ad0;border-radius:0.5px"></div>
<div class="a" style="left:650.7px;top:556.3000000000001px;width:2.6px;height:2.6px;background:#5a3ad0;border-radius:0.5px"></div>
<div class="a" style="left:838.2px;top:556.3000000000001px;width:2.6px;height:2.6px;background:#5a3ad0;border-radius:0.5px"></div>
<div class="t" style="left:869.70px;top:314.00px;font-size:14.5px;color:#1c5e8c;font-weight:bold;transform:scaleX(1.0343);transform-origin:0 0;">Barcode Samples</div>
<svg class="a" style="left:880px;top:338px" width="107" height="42" viewBox="880 338 107 42"><rect x="881.5" y="0" width="2.70" height="40.4" fill="#000" transform="translate(0 338.7)"/><rect x="884.2" y="0" width="1.80" height="40.4" fill="#666" transform="translate(0 338.7)"/><rect x="887.7" y="0" width="3.50" height="40.4" fill="#000" transform="translate(0 338.7)"/><rect x="893" y="0" width="2.00" height="40.4" fill="#111" transform="translate(0 338.7)"/><rect x="897" y="0" width="1.00" height="40.4" fill="#888" transform="translate(0 338.7)"/><rect x="900.8" y="0" width="1.20" height="40.4" fill="#111" transform="translate(0 338.7)"/><rect x="903.8" y="0" width="1.40" height="40.4" fill="#111" transform="translate(0 338.7)"/><rect x="907.3" y="0" width="1.50" height="40.4" fill="#aaa" transform="translate(0 338.7)"/><rect x="911" y="0" width="2.10" height="40.4" fill="#000" transform="translate(0 338.7)"/><rect x="915.8" y="0" width="3.80" height="40.4" fill="#000" transform="translate(0 338.7)"/><rect x="919.6" y="0" width="2.00" height="40.4" fill="#666" transform="translate(0 338.7)"/><rect x="923.4" y="0" width="1.50" height="40.4" fill="#333" transform="translate(0 338.7)"/><rect x="926.6" y="0" width="2.30" height="40.4" fill="#000" transform="translate(0 338.7)"/><rect x="928.9" y="0" width="1.20" height="40.4" fill="#777" transform="translate(0 338.7)"/><rect x="930.1" y="0" width="3.40" height="40.4" fill="#000" transform="translate(0 338.7)"/><rect x="933.5" y="0" width="1.20" height="40.4" fill="#777" transform="translate(0 338.7)"/><rect x="934.7" y="0" width="2.30" height="40.4" fill="#000" transform="translate(0 338.7)"/><rect x="938.2" y="0" width="1.80" height="40.4" fill="#111" transform="translate(0 338.7)"/><rect x="942" y="0" width="2.00" height="40.4" fill="#000" transform="translate(0 338.7)"/><rect x="944" y="0" width="1.00" height="40.4" fill="#777" transform="translate(0 338.7)"/><rect x="945" y="0" width="2.30" height="40.4" fill="#000" transform="translate(0 338.7)"/><rect x="949" y="0" width="2.70" height="40.4" fill="#000" transform="translate(0 338.7)"/><rect x="954" y="0" width="1.80" height="40.4" fill="#aaa" transform="translate(0 338.7)"/><rect x="957" y="0" width="1.70" height="40.4" fill="#aaa" transform="translate(0 338.7)"/><rect x="960.8" y="0" width="3.20" height="40.4" fill="#000" transform="translate(0 338.7)"/><rect x="964" y="0" width="1.70" height="40.4" fill="#999" transform="translate(0 338.7)"/><rect x="965.7" y="0" width="2.30" height="40.4" fill="#000" transform="translate(0 338.7)"/><rect x="968" y="0" width="2.00" height="40.4" fill="#666" transform="translate(0 338.7)"/><rect x="970" y="0" width="3.60" height="40.4" fill="#000" transform="translate(0 338.7)"/><rect x="976.6" y="0" width="3.80" height="40.4" fill="#000" transform="translate(0 338.7)"/><rect x="980.4" y="0" width="1.10" height="40.4" fill="#777" transform="translate(0 338.7)"/><rect x="981.5" y="0" width="3.50" height="40.4" fill="#000" transform="translate(0 338.7)"/></svg>
<div class="t" style="left:909.00px;top:382.00px;font-size:7.6px;color:#222;transform:scaleX(0.9792);transform-origin:0 0;">100486900111</div>
<svg class="a" style="left:895px;top:404px" width="76" height="82" viewBox="895 404 76 82"><rect x="898.5" y="407.7" width="4.5" height="69.3" fill="#000"/><rect x="904.8" y="407.7" width="3.2" height="69.3" fill="#999"/><rect x="955.2" y="407.7" width="5.5" height="69.3" fill="#000"/><rect x="962.7" y="407.7" width="5.5" height="69.3" fill="#999"/><rect x="909.89" y="407.70" width="2.99" height="8.71" fill="#000"/><rect x="913.19" y="407.70" width="2.69" height="8.71" fill="#808080"/><rect x="916.48" y="407.70" width="2.99" height="8.71" fill="#000"/><rect x="921.27" y="407.70" width="1.20" height="8.71" fill="#000"/><rect x="922.47" y="407.70" width="2.10" height="8.71" fill="#808080"/><rect x="928.16" y="407.70" width="0.90" height="8.71" fill="#000"/><rect x="932.35" y="407.70" width="2.40" height="8.71" fill="#808080"/><rect x="934.74" y="407.70" width="1.80" height="8.71" fill="#000"/><rect x="938.04" y="407.70" width="2.10" height="8.71" fill="#000"/><rect x="940.13" y="407.70" width="1.80" height="8.71" fill="#808080"/><rect x="944.32" y="407.70" width="1.80" height="8.71" fill="#000"/><rect x="946.12" y="407.70" width="2.99" height="8.71" fill="#808080"/><rect x="950.01" y="407.70" width="1.80" height="8.71" fill="#000"/><rect x="909.89" y="416.36" width="3.89" height="8.71" fill="#000"/><rect x="913.78" y="416.36" width="2.10" height="8.71" fill="#808080"/><rect x="918.87" y="416.36" width="1.20" height="8.71" fill="#000"/><rect x="921.27" y="416.36" width="3.59" height="8.71" fill="#000"/><rect x="924.86" y="416.36" width="3.89" height="8.71" fill="#808080"/><rect x="928.75" y="416.36" width="1.20" height="8.71" fill="#000"/><rect x="932.95" y="416.36" width="1.20" height="8.71" fill="#000"/><rect x="934.14" y="416.36" width="1.80" height="8.71" fill="#808080"/><rect x="936.24" y="416.36" width="4.49" height="8.71" fill="#000"/><rect x="941.33" y="416.36" width="1.80" height="8.71" fill="#808080"/><rect x="944.32" y="416.36" width="2.40" height="8.71" fill="#000"/><rect x="946.72" y="416.36" width="3.59" height="8.71" fill="#808080"/><rect x="909.89" y="425.02" width="1.20" height="8.71" fill="#000"/><rect x="911.09" y="425.02" width="3.89" height="8.71" fill="#808080"/><rect x="914.98" y="425.02" width="3.89" height="8.71" fill="#000"/><rect x="920.97" y="425.02" width="2.99" height="8.71" fill="#808080"/><rect x="927.26" y="425.02" width="3.59" height="8.71" fill="#000"/><rect x="930.85" y="425.02" width="4.49" height="8.71" fill="#808080"/><rect x="937.14" y="425.02" width="3.59" height="8.71" fill="#000"/><rect x="944.92" y="425.02" width="4.19" height="8.71" fill="#808080"/><rect x="950.91" y="425.02" width="2.99" height="8.71" fill="#000"/><rect x="909.89" y="433.69" width="0.90" height="8.71" fill="#000"/><rect x="910.79" y="433.69" width="2.99" height="8.71" fill="#808080"/><rect x="913.78" y="433.69" width="1.50" height="8.71" fill="#000"/><rect x="917.38" y="433.69" width="2.99" height="8.71" fill="#000"/><rect x="920.97" y="433.69" width="2.40" height="8.71" fill="#808080"/><rect x="923.37" y="433.69" width="2.10" height="8.71" fill="#000"/><rect x="930.55" y="433.69" width="5.39" height="8.71" fill="#b0b0b0"/><rect x="936.54" y="433.69" width="1.80" height="8.71" fill="#000"/><rect x="939.53" y="433.69" width="2.99" height="8.71" fill="#808080"/><rect x="946.72" y="433.69" width="2.40" height="8.71" fill="#000"/><rect x="953.31" y="433.69" width="1.20" height="8.71" fill="#000"/><rect x="909.99" y="442.35" width="1.33" height="8.71" fill="#000"/><rect x="911.33" y="442.35" width="2.66" height="8.71" fill="#808080"/><rect x="913.99" y="442.35" width="1.66" height="8.71" fill="#000"/><rect x="921.31" y="442.35" width="1.33" height="8.71" fill="#000"/><rect x="927.64" y="442.35" width="1.66" height="8.71" fill="#000"/><rect x="929.97" y="442.35" width="3.99" height="8.71" fill="#b0b0b0"/><rect x="933.96" y="442.35" width="1.33" height="8.71" fill="#000"/><rect x="935.29" y="442.35" width="2.00" height="8.71" fill="#808080"/><rect x="937.96" y="442.35" width="2.00" height="8.71" fill="#000"/><rect x="944.62" y="442.35" width="3.99" height="8.71" fill="#808080"/><rect x="951.94" y="442.35" width="2.00" height="8.71" fill="#000"/><rect x="909.99" y="451.01" width="2.00" height="8.71" fill="#000"/><rect x="911.99" y="451.01" width="3.33" height="8.71" fill="#808080"/><rect x="915.32" y="451.01" width="3.33" height="8.71" fill="#000"/><rect x="921.98" y="451.01" width="2.00" height="8.71" fill="#808080"/><rect x="923.98" y="451.01" width="1.33" height="8.71" fill="#000"/><rect x="929.30" y="451.01" width="2.00" height="8.71" fill="#000"/><rect x="931.30" y="451.01" width="2.66" height="8.71" fill="#808080"/><rect x="933.96" y="451.01" width="1.33" height="8.71" fill="#000"/><rect x="941.29" y="451.01" width="1.33" height="8.71" fill="#000"/><rect x="943.28" y="451.01" width="3.99" height="8.71" fill="#808080"/><rect x="947.28" y="451.01" width="2.66" height="8.71" fill="#000"/><rect x="909.99" y="459.67" width="1.33" height="8.71" fill="#000"/><rect x="911.33" y="459.67" width="3.33" height="8.71" fill="#b0b0b0"/><rect x="916.65" y="459.67" width="3.33" height="8.71" fill="#000"/><rect x="923.98" y="459.67" width="2.66" height="8.71" fill="#808080"/><rect x="927.30" y="459.67" width="2.00" height="8.71" fill="#b0b0b0"/><rect x="937.29" y="459.67" width="2.00" height="8.71" fill="#000"/><rect x="939.29" y="459.67" width="2.00" height="8.71" fill="#808080"/><rect x="941.29" y="459.67" width="1.00" height="8.71" fill="#000"/><rect x="943.28" y="459.67" width="3.99" height="8.71" fill="#808080"/><rect x="951.27" y="459.67" width="2.00" height="8.71" fill="#000"/><rect x="909.99" y="468.34" width="3.00" height="8.71" fill="#000"/><rect x="912.99" y="468.34" width="3.99" height="8.71" fill="#808080"/><rect x="916.99" y="468.34" width="2.00" height="8.71" fill="#000"/><rect x="920.98" y="468.34" width="1.33" height="8.71" fill="#000"/><rect x="922.31" y="468.34" width="2.33" height="8.71" fill="#808080"/><rect x="925.31" y="468.34" width="2.66" height="8.71" fill="#000"/><rect x="932.63" y="468.34" width="2.33" height="8.71" fill="#000"/><rect x="937.96" y="468.34" width="2.66" height="8.71" fill="#b0b0b0"/><rect x="943.28" y="468.34" width="3.33" height="8.71" fill="#808080"/><rect x="946.61" y="468.34" width="2.66" height="8.71" fill="#000"/><rect x="951.27" y="468.34" width="1.66" height="8.71" fill="#000"/></svg>
<div class="t" style="left:919px;top:478.5px;font-size:4px;color:#666;letter-spacing:0.3px">4OHFSI8O73&#183;</div>
<svg class="a" style="left:899.4px;top:502.8px" width="67.20" height="67.20" viewBox="0 0 21 21" shape-rendering="crispEdges"><path fill="#000" d="M0 0h7v1h-7zM12 0h1v1h-1zM14 0h7v1h-7zM0 1h1v1h-1zM6 1h1v1h-1zM8 1h2v1h-2zM12 1h1v1h-1zM14 1h1v1h-1zM20 1h1v1h-1zM0 2h1v1h-1zM2 2h3v1h-3zM6 2h1v1h-1zM11 2h1v1h-1zM14 2h1v1h-1zM16 2h3v1h-3zM20 2h1v1h-1zM0 3h1v1h-1zM2 3h3v1h-3zM6 3h1v1h-1zM9 3h2v1h-2zM14 3h1v1h-1zM16 3h3v1h-3zM20 3h1v1h-1zM0 4h1v1h-1zM2 4h3v1h-3zM6 4h1v1h-1zM8 4h5v1h-5zM14 4h1v1h-1zM16 4h3v1h-3zM20 4h1v1h-1zM0 5h1v1h-1zM6 5h1v1h-1zM11 5h1v1h-1zM14 5h1v1h-1zM20 5h1v1h-1zM0 6h7v1h-7zM8 6h1v1h-1zM10 6h1v1h-1zM12 6h1v1h-1zM14 6h7v1h-7zM0 8h1v1h-1zM2 8h1v1h-1zM4 8h1v1h-1zM6 8h1v1h-1zM9 8h2v1h-2zM12 8h1v1h-1zM16 8h1v1h-1zM19 8h1v1h-1zM0 9h1v1h-1zM2 9h2v1h-2zM7 9h1v1h-1zM11 9h1v1h-1zM13 9h1v1h-1zM15 9h1v1h-1zM19 9h1v1h-1zM0 10h3v1h-3zM6 10h1v1h-1zM8 10h1v1h-1zM11 10h1v1h-1zM13 10h3v1h-3zM17 10h3v1h-3zM0 11h1v1h-1zM5 11h1v1h-1zM8 11h2v1h-2zM11 11h3v1h-3zM15 11h6v1h-6zM0 12h5v1h-5zM6 12h2v1h-2zM11 12h1v1h-1zM13 12h3v1h-3zM20 12h1v1h-1zM8 13h2v1h-2zM14 13h2v1h-2zM0 14h7v1h-7zM9 14h2v1h-2zM12 14h1v1h-1zM16 14h2v1h-2zM20 14h1v1h-1zM0 15h1v1h-1zM6 15h1v1h-1zM14 15h2v1h-2zM17 15h1v1h-1zM20 15h1v1h-1zM0 16h1v1h-1zM2 16h3v1h-3zM6 16h1v1h-1zM8 16h1v1h-1zM12 16h1v1h-1zM14 16h1v1h-1zM16 16h1v1h-1zM20 16h1v1h-1zM0 17h1v1h-1zM2 17h3v1h-3zM6 17h1v1h-1zM11 17h1v1h-1zM13 17h1v1h-1zM15 17h1v1h-1zM17 17h1v1h-1zM19 17h1v1h-1zM0 18h1v1h-1zM2 18h3v1h-3zM6 18h1v1h-1zM8 18h1v1h-1zM11 18h1v1h-1zM13 18h2v1h-2zM16 18h1v1h-1zM18 18h1v1h-1zM20 18h1v1h-1zM0 19h1v1h-1zM6 19h1v1h-1zM9 19h3v1h-3zM13 19h1v1h-1zM16 19h1v1h-1zM0 20h7v1h-7zM8 20h4v1h-4zM13 20h2v1h-2zM18 20h1v1h-1zM20 20h1v1h-1z"/></svg>
<div class="t" style="left:919px;top:571px;font-size:4.5px;color:#333;letter-spacing:0.2px">XXXXXXXX</div>
<div class="a" style="left:144px;top:124.3px;width:290.8px;height:459.3px;border-radius:5px;box-shadow:0 8px 22px rgba(0,0,0,0.34),0 0 3px rgba(0,0,0,0.16);background:#f0f0f0;border:1px solid #b4b4b4;overflow:hidden"></div>
<div class="a" style="left:145px;top:125.3px;width:288.8px;height:19.3px;background:#e7f2f5;border-top-left-radius:4px;border-top-right-radius:4px"></div>
<div class="t" style="left:149.00px;top:131.00px;font-size:8.0px;color:#262626;transform:scaleX(0.8731);transform-origin:0 0;">Recipe View's Properties</div>
<svg class="a" style="left:422px;top:130px" width="7" height="7" viewBox="0 0 7 7"><path d="M0.4 0.4 L6.6 6.6 M6.6 0.4 L0.4 6.6" stroke="#2a2a2a" stroke-width="1.05"/></svg>
<div class="a" style="left:148px;top:159.5px;width:281.7px;height:400.5px;background:#fff;border:1px solid #ececec"></div>
<div class="a" style="left:148.1px;top:148.6px;width:30.5px;height:12px;background:#fff;border:1px solid #e4e4e4;border-bottom:none"></div>
<div class="a" style="left:207.5px;top:150px;width:1px;height:9px;background:#ececec"></div>
<div class="a" style="left:233.3px;top:150px;width:1px;height:9px;background:#ececec"></div>
<div class="a" style="left:260.6px;top:150px;width:1px;height:9px;background:#ececec"></div>
<div class="a" style="left:287px;top:150px;width:1px;height:9px;background:#ececec"></div>
<div class="t" style="left:152.00px;top:150.00px;font-size:7.4px;color:#222222;transform:scaleX(0.8517);transform-origin:0 0;">General</div>
<div class="t" style="left:181.70px;top:151.00px;font-size:7.4px;color:#222222;transform:scaleX(0.8703);transform-origin:0 0;">Security</div>
<div class="t" style="left:213.00px;top:151.00px;font-size:7.4px;color:#222222;transform:scaleX(0.8466);transform-origin:0 0;">Shape</div>
<div class="t" style="left:240.00px;top:151.00px;font-size:7.4px;color:#222222;transform:scaleX(0.9230);transform-origin:0 0;">Font</div>
<div class="t" style="left:263.75px;top:151.00px;font-size:7.4px;color:#222222;transform:scaleX(0.8854);transform-origin:0 0;">Profile</div>
<div class="t" style="left:192.90px;top:171.00px;font-size:7.4px;color:#222222;transform:scaleX(0.8507);transform-origin:0 0;">Comment :</div>
<div class="a" style="left:228.8px;top:167.3px;width:187.6px;height:12.3px;background:#fff;border:1px solid #f2f2f2;border-bottom:1px solid #a0a0a0;border-radius:1px"></div>
<div class="a" style="left:156.2px;top:185.4px;width:265.6px;height:31.8px;border:1px solid #dedede"></div>
<div class="a" style="left:213.1px;top:190.8px;width:7.6px;height:7.8px;border:0.8px solid #a0a0a0;border-radius:1.8px;background:#f6f6f6"></div>
<div class="t" style="left:223.60px;top:191.00px;font-size:7.4px;color:#222222;transform:scaleX(0.8887);transform-origin:0 0;">Filter enabled</div>
<div class="a" style="left:213.1px;top:204.8px;width:7.6px;height:7.8px;border:0.8px solid #a0a0a0;border-radius:1.8px;background:#f6f6f6"></div>
<div class="t" style="left:223.60px;top:205.00px;font-size:7.4px;color:#222222;transform:scaleX(0.8703);transform-origin:0 0;">Allow in-cell editing</div>
<div class="a" style="left:156.3px;top:225.4px;width:265px;height:149.4px;border:1px solid #dedede"></div>
<div class="a" style="left:159.5px;top:222px;width:40px;height:7px;background:#fff"></div>
<div class="t" style="left:161.50px;top:222.00px;font-size:7.4px;color:#222222;transform:scaleX(0.8761);transform-origin:0 0;">Recipe table</div>
<div class="t" style="left:182.10px;top:237.00px;font-size:7.4px;color:#222222;transform:scaleX(0.8719);transform-origin:0 0;">Recipe name :</div>
<div class="a" style="left:228.1px;top:234.1px;width:59.9px;height:11.2px;background:#fafafa;border:1px solid #dedede;border-radius:1.5px"></div>
<div class="t" style="left:229.40px;top:237.00px;font-size:7.4px;color:#222222;transform:scaleX(0.9543);transform-origin:0 0;">Inventory</div>
<svg class="a" style="left:281.3px;top:238.6px" width="5" height="3" viewBox="0 0 5 3"><path d="M0 0 H5 L2.5 3 Z" fill="#222"/></svg>
<div class="a" style="left:162.6px;top:251.5px;width:253.1px;height:116.4px;background:#fff;border:1px solid #a4a4a4"></div>
<div class="a" style="left:171.3px;top:252.5px;width:1px;height:67px;background:#ededed"></div>
<div class="a" style="left:232.2px;top:252.5px;width:1px;height:67px;background:#e4e4e4"></div>
<div class="a" style="left:293.3px;top:252.5px;width:1px;height:67px;background:#e4e4e4"></div>
<div class="a" style="left:172px;top:282.2px;width:121.5px;height:1px;background:#e4e4e4"></div>
<div class="a" style="left:172px;top:301.1px;width:121.5px;height:1px;background:#e4e4e4"></div>
<div class="a" style="left:172px;top:319px;width:121.5px;height:1px;background:#e4e4e4"></div>
<div class="t" style="left:186.90px;top:255.00px;font-size:7.4px;color:#222222;transform:scaleX(0.8763);transform-origin:0 0;">Item name</div>
<div class="t" style="left:252.80px;top:255.00px;font-size:7.4px;color:#222222;transform:scaleX(0.8355);transform-origin:0 0;">Display</div>
<div class="t" style="left:166.20px;top:271.00px;font-size:7.4px;color:#222222;transform:scaleX(0.6500);transform-origin:0 0;">1</div>
<div class="t" style="left:173.80px;top:271.00px;font-size:7.4px;color:#222222;transform:scaleX(0.8462);transform-origin:0 0;">Barcode</div>
<svg class="a" style="left:259.3px;top:270.30px" width="8" height="8" viewBox="0 0 8 8"><rect x="0" y="0" width="8" height="8" rx="1.6" fill="#1462bb"/><path d="M2.1 4.1 L3.4 5.4 L6 2.7" fill="none" stroke="#fff" stroke-width="0.9"/></svg>
<div class="t" style="left:166.20px;top:289.00px;font-size:7.4px;color:#222222;transform:scaleX(0.6500);transform-origin:0 0;">2</div>
<div class="t" style="left:173.80px;top:289.00px;font-size:7.4px;color:#222222;transform:scaleX(0.9144);transform-origin:0 0;">Item</div>
<svg class="a" style="left:259.3px;top:288.40px" width="8" height="8" viewBox="0 0 8 8"><rect x="0" y="0" width="8" height="8" rx="1.6" fill="#1462bb"/><path d="M2.1 4.1 L3.4 5.4 L6 2.7" fill="none" stroke="#fff" stroke-width="0.9"/></svg>
<div class="t" style="left:166.20px;top:307.00px;font-size:7.4px;color:#222222;transform:scaleX(0.6500);transform-origin:0 0;">3</div>
<div class="t" style="left:173.80px;top:307.00px;font-size:7.4px;color:#222222;transform:scaleX(0.8876);transform-origin:0 0;">Quantity</div>
<svg class="a" style="left:259.3px;top:306.70px" width="8" height="8" viewBox="0 0 8 8"><rect x="0" y="0" width="8" height="8" rx="1.6" fill="#1462bb"/><path d="M2.1 4.1 L3.4 5.4 L6 2.7" fill="none" stroke="#fff" stroke-width="0.9"/></svg>
<div class="a" style="left:151.3px;top:217.3px;width:151.7px;height:110px;border:3px solid #d8262e"></div>
<div class="a" style="left:156.2px;top:384px;width:265.3px;height:62.2px;border:1px solid #dedede"></div>
<div class="a" style="left:160px;top:380px;width:61px;height:7px;background:#fff"></div>
<div class="t" style="left:161.90px;top:380.00px;font-size:7.4px;color:#222222;transform:scaleX(0.8962);transform-origin:0 0;">Default sort method</div>
<div class="a" style="left:228.2px;top:396.8px;width:7.6px;height:7.8px;border:0.8px solid #a0a0a0;border-radius:1.8px;background:#f6f6f6"></div>
<div class="t" style="left:238.60px;top:397.00px;font-size:7.4px;color:#222222;transform:scaleX(0.8427);transform-origin:0 0;">Enable</div>
<div class="t" style="left:204.50px;top:458.00px;font-size:7.4px;color:#222222;transform:scaleX(0.8934);transform-origin:0 0;">Style :</div>
<div class="a" style="left:227.2px;top:456px;width:60.9px;height:10.6px;background:#fafafa;border:1px solid #dedede;border-radius:1.5px"></div>
<div class="t" style="left:229.40px;top:458.00px;font-size:7.4px;color:#222222;transform:scaleX(0.9538);transform-origin:0 0;">Flat</div>
<svg class="a" style="left:281.3px;top:460.3px" width="5" height="3" viewBox="0 0 5 3"><path d="M0 0 H5 L2.5 3 Z" fill="#222"/></svg>
<div class="t" style="left:318.00px;top:458.00px;font-size:7.4px;color:#222222;transform:scaleX(0.8922);transform-origin:0 0;">Style color :</div>
<div class="a" style="left:357.2px;top:455.7px;width:58.1px;height:10.6px;background:#fff;border:1px solid #dedede;border-radius:1.5px"></div>
<div class="a" style="left:363.1px;top:456.7px;width:46.7px;height:8.3px;background:#045a88"></div>
<svg class="a" style="left:411px;top:462.5px" width="3" height="2" viewBox="0 0 3 2"><path d="M0 0 H3 L1.5 2 Z" fill="#222"/></svg>
<div class="t" style="left:156.90px;top:472.00px;font-size:7.4px;color:#222222;transform:scaleX(0.8792);transform-origin:0 0;">Caption</div>
<div class="a" style="left:181px;top:474.5px;width:241px;height:1px;background:#c8c8c8"></div>
<div class="a" style="left:226.7px;top:484.6px;width:7.6px;height:7.8px;border:0.8px solid #a0a0a0;border-radius:1.8px;background:#f6f6f6"></div>
<div class="t" style="left:236.90px;top:485.00px;font-size:7.4px;color:#222222;transform:scaleX(0.8711);transform-origin:0 0;">Use caption</div>
<div class="a" style="left:238.2px;top:566.1px;width:44.4px;height:12.5px;background:#f6fbfe;border:1px solid #5b9bc3;border-radius:2.5px"></div>
<div class="t" style="left:255.30px;top:569.00px;font-size:7.4px;color:#222222;transform:scaleX(0.8466);transform-origin:0 0;">OK</div>
<div class="a" style="left:287.6px;top:566.1px;width:43.4px;height:12.5px;background:#fdfdfd;border:1px solid #dcdcdc;border-radius:2.5px"></div>
<div class="t" style="left:299.20px;top:569.00px;font-size:7.4px;color:#222222;transform:scaleX(0.8346);transform-origin:0 0;">Cancel</div>
<div class="a" style="left:336.8px;top:566.1px;width:43.6px;height:12.5px;background:#fdfdfd;border:1px solid #dcdcdc;border-radius:2.5px"></div>
<div class="t" style="left:350.30px;top:569.00px;font-size:7.4px;color:#222222;transform:scaleX(0.8780);transform-origin:0 0;">Apply</div>
<div class="a" style="left:386.4px;top:566.1px;width:43.4px;height:12.5px;background:#fdfdfd;border:1px solid #dcdcdc;border-radius:2.5px"></div>
<div class="t" style="left:401.20px;top:569.00px;font-size:7.4px;color:#222222;transform:scaleX(0.8681);transform-origin:0 0;">Help</div>
</body></html>
